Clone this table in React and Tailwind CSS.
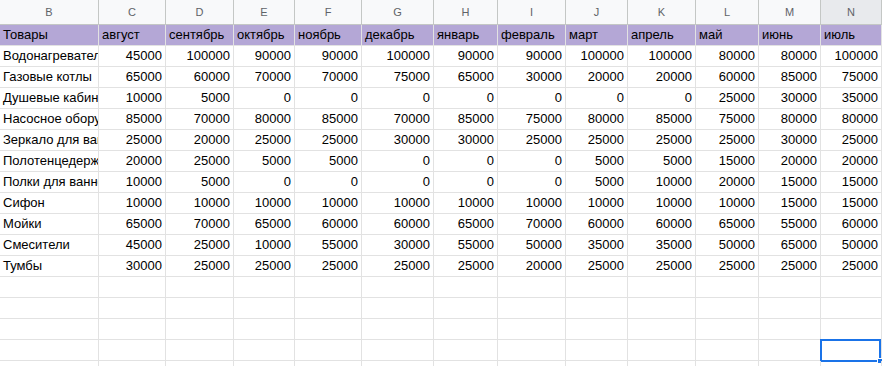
import React from "react";

const widths = [99, 67, 68, 61, 67, 72, 64, 68, 62, 68, 63, 62, 61];
const letters = ["B", "C", "D", "E", "F", "G", "H", "I", "J", "K", "L", "M", "N"];

const months = ["Товары", "август", "сентябрь", "октябрь", "ноябрь", "декабрь", "январь", "февраль", "март", "апрель", "май", "июнь", "июль"];

const rows = [
  ["Водонагреватель", 45000, 100000, 90000, 90000, 100000, 90000, 90000, 100000, 100000, 80000, 80000, 100000],
  ["Газовые котлы", 65000, 60000, 70000, 70000, 75000, 65000, 30000, 20000, 20000, 60000, 85000, 75000],
  ["Душевые кабины", 10000, 5000, 0, 0, 0, 0, 0, 0, 0, 25000, 30000, 35000],
  ["Насосное оборудование", 85000, 70000, 80000, 85000, 70000, 85000, 75000, 80000, 85000, 75000, 80000, 80000],
  ["Зеркало для ванной", 25000, 20000, 25000, 25000, 30000, 30000, 25000, 25000, 25000, 25000, 30000, 25000],
  ["Полотенцедержатели", 20000, 25000, 5000, 5000, 0, 0, 0, 5000, 5000, 15000, 20000, 20000],
  ["Полки для ванной", 10000, 5000, 0, 0, 0, 0, 0, 5000, 10000, 20000, 15000, 15000],
  ["Сифон", 10000, 10000, 10000, 10000, 10000, 10000, 10000, 10000, 10000, 10000, 15000, 15000],
  ["Мойки", 65000, 70000, 65000, 60000, 60000, 65000, 70000, 60000, 60000, 65000, 55000, 60000],
  ["Смесители", 45000, 25000, 10000, 55000, 30000, 55000, 50000, 35000, 35000, 50000, 65000, 50000],
  ["Тумбы", 30000, 25000, 25000, 25000, 25000, 25000, 20000, 25000, 25000, 25000, 25000, 25000],
];

const gridCols = { gridTemplateColumns: widths.map((w) => `${w}px`).join(" ") };

export default function App() {
  const emptyRows = 5;

  return (
    <div className="w-[882px] h-[366px] overflow-hidden bg-white font-['Liberation_Sans',Arial,sans-serif] text-[13px] text-black">
      {/* column letters */}
      <div className="grid h-[25px]" style={gridCols}>
        {letters.map((l, i) => (
          <div
            key={l}
            className={`flex items-center justify-center border-r border-b border-[#c4c7c5] text-[11px] text-[#5f6368] ${
              i === 12 ? "bg-[#e8eaed]" : "bg-[#f8f9fa]"
            }`}
          >
            {l}
          </div>
        ))}
      </div>

      {/* header row */}
      <div className="grid h-[21px]" style={gridCols}>
        {months.map((m) => (
          <div key={m} className="flex items-end pb-[1px] px-[3px] bg-[#b4a7d6] border-r border-b border-[#e2e2e2] overflow-hidden whitespace-nowrap">
            {m}
          </div>
        ))}
      </div>

      {/* data rows */}
      {rows.map((r) => (
        <div key={r[0]} className="grid h-[21px]" style={gridCols}>
          {r.map((v, i) => (
            <div
              key={i}
              className={`flex items-end pb-[1px] px-[3px] border-r border-b border-[#e2e2e2] overflow-hidden whitespace-nowrap ${
                i === 0 ? "justify-start" : "justify-end"
              }`}
            >
              {v}
            </div>
          ))}
        </div>
      ))}

      {/* empty rows */}
      {Array.from({ length: emptyRows }).map((_, ri) => (
        <div key={ri} className="grid h-[21px]" style={gridCols}>
          {widths.map((_, i) => (
            <div key={i} className="relative border-r border-b border-[#e2e2e2]">
              {ri === 3 && i === 12 && (
                <div className="absolute -left-[1px] -top-[1px] w-[61px] h-[23px] border-2 border-[#1a73e8]">
                  <div className="absolute -right-[4px] -bottom-[4px] w-[6px] h-[6px] bg-[#1a73e8] border border-white" />
                </div>
              )}
            </div>
          ))}
        </div>
      ))}
    </div>
  );
}
